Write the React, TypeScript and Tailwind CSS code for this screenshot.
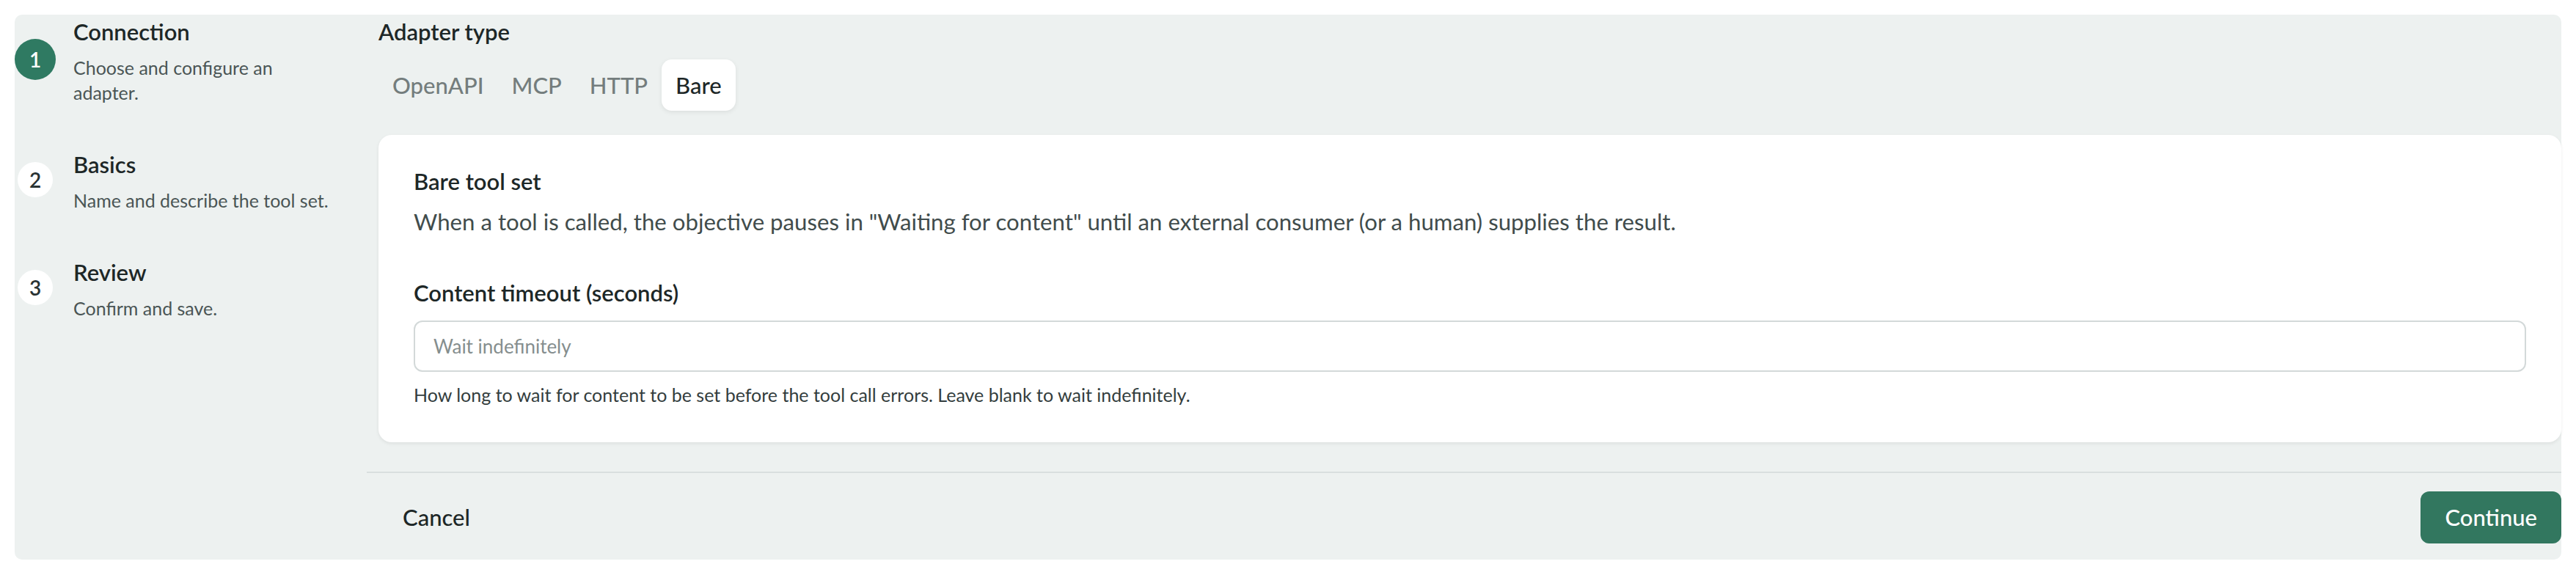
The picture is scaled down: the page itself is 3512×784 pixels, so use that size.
import { useState } from 'react'

type Step = { n: number; title: string; desc: string }

const steps: Step[] = [
  { n: 1, title: 'Connection', desc: 'Choose and configure an adapter.' },
  { n: 2, title: 'Basics', desc: 'Name and describe the tool set.' },
  { n: 3, title: 'Review', desc: 'Confirm and save.' },
]

const adapters = ['OpenAPI', 'MCP', 'HTTP', 'Bare'] as const

export default function App() {
  const [adapter, setAdapter] = useState<(typeof adapters)[number]>('Bare')
  const [timeout, setTimeoutValue] = useState('')
  const current = 1

  return (
    <div className="min-h-screen bg-white p-[20px] font-['Lato','Noto_Sans',sans-serif] text-[#1d2727]">
      <div className="flex h-[743px] rounded-[10px] bg-[#edf1f0]">
        {/* steps */}
        <aside className="w-[480px] shrink-0 pt-[1px]">
          <ol className="flex flex-col gap-[59px]">
            {steps.map((step) => {
              const active = step.n === current
              return (
                <li key={step.n} className="flex items-center gap-[24px]">
                  <div className="flex w-[56px] shrink-0 justify-center -translate-y-[1px]">
                    {active ? (
                      <span className="flex h-[56px] w-[56px] items-center justify-center rounded-full bg-[#2f7a62] text-[28px] font-semibold text-white">
                        {step.n}
                      </span>
                    ) : (
                      <span className="flex h-[48px] w-[48px] items-center justify-center rounded-full bg-white text-[28px] font-semibold text-[#2a3333]">
                        {step.n}
                      </span>
                    )}
                  </div>
                  <div className="w-[358px]">
                    <p className="text-[31px] leading-[45px] font-semibold text-[#1d2727]">{step.title}</p>
                    <p className="mt-[9px] text-[25px] leading-[34px] text-[#4a5555]">{step.desc}</p>
                  </div>
                </li>
              )
            })}
          </ol>
        </aside>

        {/* main */}
        <div className="flex min-w-0 flex-1 flex-col">
          <div className="flex-1 pl-[16px] pt-[1px]">
            <p className="text-[31px] leading-[45px] font-semibold text-[#1d2727]">Adapter type</p>
            <div className="mt-[15px] flex">
              {adapters.map((a) => (
                <button
                  key={a}
                  type="button"
                  onClick={() => setAdapter(a)}
                  className={`h-[70px] rounded-[14px] px-[19px] text-[31px] leading-[45px] font-medium ${
                    adapter === a
                      ? 'bg-white text-[#1d2727] shadow-[0_2px_6px_rgba(0,0,0,0.08)]'
                      : 'text-[#747d7d]'
                  }`}
                >
                  {a}
                </button>
              ))}
            </div>

            <section className="mt-[33px] rounded-[18px] bg-white px-[48px] pt-[41px] pb-[47px] shadow-[0_2px_5px_rgba(0,0,0,0.07)]">
              <h2 className="text-[31px] leading-[45px] font-semibold text-[#1d2727]">Bare tool set</h2>
              <p className="mt-[10px] text-[31.2px] leading-[45px] text-[#414c4c]">
                When a tool is called, the objective pauses in "Waiting for content" until an external consumer (or a human) supplies the result.
              </p>

              <label className="mt-[52px] block text-[31px] leading-[45px] font-semibold text-[#1d2727]">
                Content timeout (seconds)
              </label>
              <input
                value={timeout}
                onChange={(e) => setTimeoutValue(e.target.value)}
                placeholder="Wait indefinitely"
                className="mt-[15px] block h-[70px] w-full rounded-[12px] border-2 border-[#d3d9d9] bg-white px-[25px] text-[26px] text-[#1d2727] outline-none placeholder:text-[#858e8e]"
              />
              <p className="mt-[13px] text-[25px] leading-[36px] text-[#333d3d]">
                How long to wait for content to be set before the tool call errors. Leave blank to wait indefinitely.
              </p>
            </section>
          </div>

          <footer className="mt-[40px] flex items-center justify-between border-t-2 border-[#d9dfdf] pt-[25px] pb-[24px]">
            <button type="button" className="pl-[49px] text-[31px] leading-[45px] font-medium text-[#1d2727]">
              Cancel
            </button>
            <button
              type="button"
              className="h-[71px] rounded-[12px] bg-[#32775f] px-[33px] text-[31px] leading-[45px] font-medium text-white"
            >
              Continue
            </button>
          </footer>
        </div>
      </div>
    </div>
  )
}
